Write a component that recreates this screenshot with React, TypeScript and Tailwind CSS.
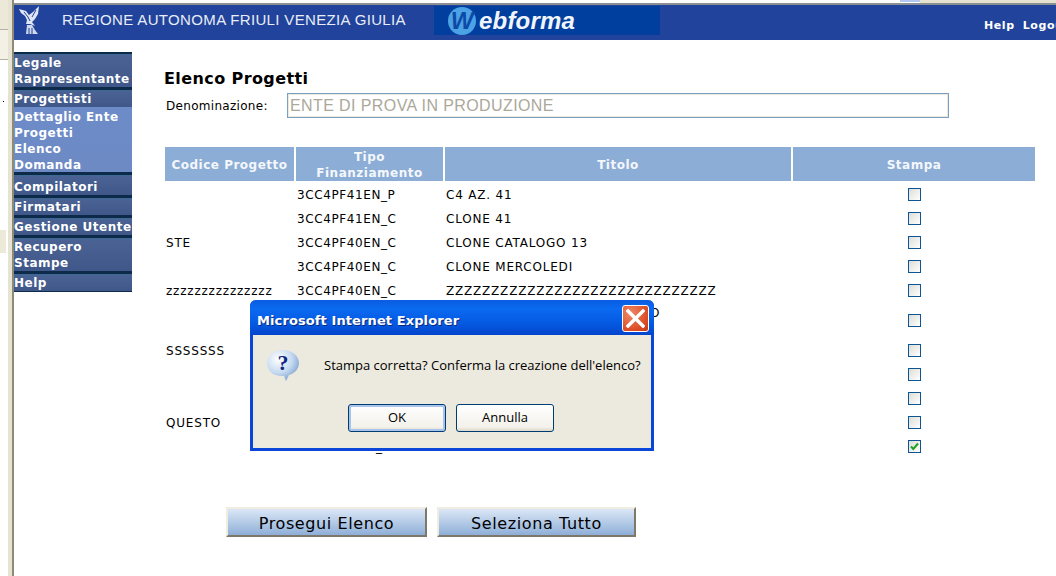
const menu = [
  { lines: ["Legale", "Rappresentante"], cls: "border-t-2 pt-px" },
  { lines: ["Progettisti"], cls: "border-t-[3px] pt-px" },
]
const menuBottom = [
  { lines: ["Compilatori"], cls: "border-t-[3px] pt-1" },
  { lines: ["Firmatari"], cls: "border-t-[3px] pt-px" },
  { lines: ["Gestione Utente"], cls: "border-t-[3px] pt-px" },
  { lines: ["Recupero", "Stampe"], cls: "border-t-[3px] pt-px" },
  { lines: ["Help"], cls: "border-t-[3px] border-b pt-px" },
]

const rows = [
  { name: "", code: "3CC4PF41EN_P", title: "C4 AZ. 41", h: "h-6" },
  { name: "", code: "3CC4PF41EN_C", title: "CLONE 41", h: "h-6" },
  { name: "STE", code: "3CC4PF40EN_C", title: "CLONE CATALOGO 13", h: "h-6" },
  { name: "", code: "3CC4PF40EN_C", title: "CLONE MERCOLEDI", h: "h-6" },
  { name: "zzzzzzzzzzzzzzz", code: "3CC4PF40EN_C", title: "ZZZZZZZZZZZZZZZZZZZZZZZZZZZZZZ", h: "h-6" },
  { name: "", code: "", title: "", h: "h-9", tail: true },
  { name: "SSSSSSS", code: "", title: "", h: "h-6" },
  { name: "", code: "", title: "", h: "h-6" },
  { name: "", code: "", title: "", h: "h-6" },
  { name: "QUESTO", code: "", title: "", h: "h-6" },
  { name: "", code: "", title: "", h: "h-6", checked: true },
]

function MenuItem({ lines, cls }: { lines: string[]; cls: string }) {
  return (
    <div className={`${cls} border-[#0d2a4a] bg-[linear-gradient(#2f6f8f_0,#4a6394_1px,#3f5789_100%)]`}>
      {lines.map((l) => (
        <div key={l} className="h-4 text-[12px] leading-4 font-bold whitespace-nowrap tracking-[0.5px] text-white">{l}</div>
      ))}
    </div>
  )
}

function Eagle() {
  return (
    <svg width="22" height="30" viewBox="0 0 22 30" className="ml-[5px] mt-px shrink-0">
      <path d="M0 3 L7 5 L10 9 L14 6 L20 0 L19 8 L16 13 L13 16 L16 20 L11 18 L7 18 L8 14 L6 10 L2 7 Z" fill="#dfe6f4" />
      <path d="M5 6 L9 11 L11 15 M17 4 L13 11" stroke="#21409a" strokeWidth="1" fill="none" />
      <path d="M8 19 L7 28 L19 28 L16 24 L13 19 Z" fill="#cfd8ec" />
      <path d="M10 22 L10 28 M13 22 L13 28" stroke="#21409a" strokeWidth="1" />
    </svg>
  )
}

function Checkbox({ checked }: { checked?: boolean }) {
  return (
    <span className="flex size-[13px] items-center justify-center border border-[#0f5593] bg-[linear-gradient(135deg,#dcdcd7,#ffffff)]">
      {checked && (
        <svg width="9" height="9" viewBox="0 0 9 9">
          <path d="M1 4.5 L3.3 7 L8 1.5" stroke="#21a121" strokeWidth="2" fill="none" />
        </svg>
      )}
    </span>
  )
}

function HeadCell({ children }: { children: React.ReactNode }) {
  return (
    <div className="flex items-center justify-center bg-[#8cadd6] pt-[2px] text-center text-[12px] leading-4 font-bold tracking-[0.5px] text-[#f4f7fb]">
      <div>{children}</div>
    </div>
  )
}

function PageButton({ label, w }: { label: string; w: string }) {
  return (
    <button className={`${w} h-[30px] border-2 border-[#f1ece0] border-r-[#7d7869] border-b-[#7d7869] bg-[linear-gradient(#dbe7f6,#8fafd8)] pt-1 font-["DejaVu_Sans",sans-serif] text-[16px] leading-5 tracking-[0.6px] text-black`}>
      {label}
    </button>
  )
}

function QuestionIcon() {
  return (
    <svg width="34" height="34" viewBox="0 0 34 34" className="shrink-0">
      <defs>
        <radialGradient id="bubble" cx="0.35" cy="0.3" r="0.8">
          <stop offset="0" stopColor="#ffffff" />
          <stop offset="0.55" stopColor="#c5d9f0" />
          <stop offset="1" stopColor="#6f97c8" />
        </radialGradient>
      </defs>
      <path d="M17 1 C26 1 33 7 33 14 C33 20 28 25 23 26 L20 32 L18 27 C8 28 1 22 1 14 C1 7 8 1 17 1 Z" fill="url(#bubble)" />
      <text x="17" y="21" textAnchor="middle" fontFamily="Liberation Serif, serif" fontWeight="700" fontSize="22" fill="#10257f">?</text>
    </svg>
  )
}

function DialogButton({ label, focus }: { label: string; focus?: boolean }) {
  return (
    <button className={`h-7 w-[98px] rounded-[3px] border border-[#003c74] bg-[linear-gradient(#ffffff,#f3f1ea_85%,#dcd8c8)] font-["Open_Sans",sans-serif] text-[13px] text-black ${focus ? "shadow-[inset_0_0_0_2px_#a9c4ec]" : ""}`}>
      {label}
    </button>
  )
}

export default function App() {
  return (
    <div className='relative flex h-[576px] w-[1056px] overflow-hidden bg-white font-["DejaVu_Sans",sans-serif] text-black'>
      {/* pezzo della finestra dietro */}
      <div className="flex w-[14px] shrink-0">
        <div className="flex w-2 flex-col">
          <div className="h-[30px] border-b border-[#b5b2a5] bg-[#ece9d8]" />
          <div className="h-[30px] border-b border-[#b5b2a5] bg-[#f3f1e6]" />
          <div className="relative h-[170px]">
            <span className="absolute left-[3px] top-[41px] size-px bg-black" />
          </div>
          <div className="h-[23px] w-1.5 bg-[#ece9d8]" />
        </div>
        <div className="w-[6px] border-r-2 border-[#8f8a76] bg-[#e6e3d3]" />
      </div>

      <div className="flex min-w-0 flex-1 flex-col">
        <div className="flex h-[5px] shrink-0 flex-col">
          <div className="flex h-[3px]">
            <div className="w-[906px] bg-white">
              <div className="ml-[886px] h-[2px] w-5 bg-[#b3c6ef]" />
            </div>
            <div className="flex-1 bg-[#e6e2d0]" />
          </div>
          <div className="h-[2px] bg-[#8a8f92]" />
        </div>

        <header className="flex h-[35px] shrink-0 items-start bg-[#21439b] text-white">
          <Eagle />
          <div className='ml-[21px] mt-[7px] w-[372px] shrink-0 font-["Liberation_Sans",sans-serif] text-[15px] leading-4 tracking-[0.35px] whitespace-nowrap text-[#e8edf7]'>
            REGIONE AUTONOMA FRIULI VENEZIA GIULIA
          </div>
          <div className="mt-px flex h-[29px] w-[226px] shrink-0 items-center bg-[#003f9e] pl-[14px]">
            <div className='flex size-[28px] items-center justify-center rounded-full bg-[#4ba3e6] font-["Liberation_Sans",sans-serif] text-[24px] font-bold italic text-[#0d4aa8]'>W</div>
            <div className='ml-[3px] font-["Liberation_Sans",sans-serif] text-[24px] leading-7 font-bold italic tracking-[0.2px] text-[#f1f5fb]'>ebforma</div>
          </div>
          <div className="ml-[324px] mt-[13px] flex shrink-0 gap-2 text-[11px] leading-4 font-bold tracking-[0.6px] whitespace-nowrap">
            <span>Help</span>
            <span>Logout</span>
          </div>
        </header>

        <div className="flex min-h-0 flex-1">
          <nav className="mt-3 w-[118px] shrink-0">
            {menu.map((m) => <MenuItem key={m.lines[0]} {...m} />)}
            <div className="h-[65px] bg-[linear-gradient(#6c8bc8,#6d8ac4)] pt-[2px]">
              {["Dettaglio Ente", "Progetti", "Elenco", "Domanda"].map((l) => (
                <div key={l} className="h-4 text-[12px] leading-4 font-bold tracking-[0.5px] whitespace-nowrap text-white">{l}</div>
              ))}
            </div>
            {menuBottom.map((m) => <MenuItem key={m.lines[0]} {...m} />)}
          </nav>

          <main className="ml-[32px] min-w-0 flex-1">
            <h1 className="mt-[29px] h-5 text-[16px] leading-5 font-bold tracking-[0.4px]">Elenco Progetti</h1>
            <div className="mt-1 flex h-[25px] items-center">
              <label className="ml-[2px] w-[121px] text-[12px] tracking-[0.3px]">Denominazione:</label>
              <div className='flex h-[25px] w-[662px] items-center border border-[#7b9fc4] pl-[2px] font-["Liberation_Sans",sans-serif] text-[16px] tracking-[0.4px] text-[#aba89a] shadow-[inset_0_0_0_1px_#ece9d8]'>
                ENTE DI PROVA IN PRODUZIONE
              </div>
            </div>

            <div className="ml-px mt-[29px] w-[870px]">
              <div className="grid h-[34px] grid-cols-[129px_147px_346px_242px] gap-x-[2px]">
                <HeadCell>Codice Progetto</HeadCell>
                <HeadCell>Tipo<br />Finanziamento</HeadCell>
                <HeadCell>Titolo</HeadCell>
                <HeadCell>Stampa</HeadCell>
              </div>
              <div className="mt-[2px]">
                {rows.map((r, i) => (
                  <div key={i} className={`${r.h} grid grid-cols-[129px_147px_346px_242px] items-center gap-x-[2px] text-[12px] leading-4 tracking-[0.6px]`}>
                    <div className="pl-px tracking-[0.8px] whitespace-nowrap">{r.name}</div>
                    {r.checked ? (
                      <div className="pl-[80px]">_</div>
                    ) : (
                      <div className="pl-px">{r.code}</div>
                    )}
                    {r.tail ? (
                      <div className="-mt-4 pl-[205px]">O</div>
                    ) : (
                      <div className="pl-px tracking-[0.8px] whitespace-nowrap">{r.title}</div>
                    )}
                    <div className="-mt-[2px] flex justify-center pl-px"><Checkbox checked={r.checked} /></div>
                  </div>
                ))}
              </div>
            </div>

            <div className="ml-[62px] mt-12 flex gap-[10px]">
              <PageButton label="Prosegui Elenco" w="w-[201px]" />
              <PageButton label="Seleziona Tutto" w="w-[199px]" />
            </div>
          </main>
        </div>
      </div>

      {/* finestra di conferma */}
      <div className="absolute left-[250px] top-[300px] h-[151px] w-[404px] rounded-t-[6px] border-x-[3px] border-b-[3px] border-[#0a46d8] bg-[#ece9de]">
        <div className="-mx-[3px] flex h-[35px] items-start justify-between rounded-t-[6px] bg-[linear-gradient(#0a5ce0,#0a6af0_25%,#0558e0_70%,#0445cc)] pl-[7px] pr-[5px] pt-[5px]">
          <span className='mt-2 text-[13px] leading-4 font-bold tracking-[0.1px] text-white [text-shadow:1px_1px_#0a2a80]'>Microsoft Internet Explorer</span>
          <span className="flex size-[27px] items-center justify-center rounded-[3px] border border-white bg-[radial-gradient(circle_at_30%_30%,#ef8a68,#dc4a22_70%,#c23a18)]">
            <svg width="19" height="19" viewBox="0 0 19 19">
              <path d="M2 2 L17 17 M17 2 L2 17" stroke="#ffffff" strokeWidth="3.4" strokeLinecap="square" />
            </svg>
          </span>
        </div>
        <div className="ml-[13px] mt-[14px] flex items-center">
          <QuestionIcon />
          <span className='ml-[24px] pb-[2px] font-["Open_Sans",sans-serif] text-[13px] leading-5 whitespace-nowrap'>Stampa corretta? Conferma la creazione dell'elenco?</span>
        </div>
        <div className="mt-[21px] flex justify-center gap-[10px] pr-[2px]">
          <DialogButton label="OK" focus />
          <DialogButton label="Annulla" />
        </div>
      </div>
    </div>
  )
}
